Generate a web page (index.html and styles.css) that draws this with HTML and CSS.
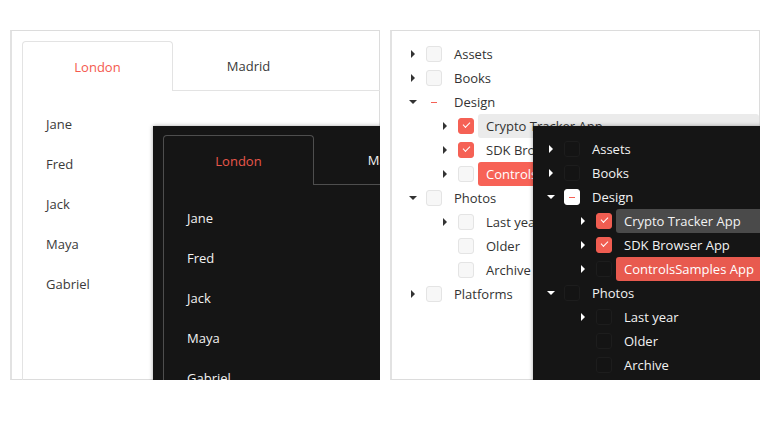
FILE: index.html
```html
<!DOCTYPE html>
<html lang="en">
<head>
    <meta charset="UTF-8">
    <title>Tabs and tree themes</title>
    <link rel="stylesheet" href="styles.css">
</head>
<body>

<div class="stage">
    <!-- tab view, light and dark -->
    <div class="card">
        <div class="demo light">
            <div class="tabs">
                <div class="tab active">London</div>
                <div class="tab">Madrid</div>
                <div class="tab-fill"></div>
            </div>
            <ul class="people">
                <li>Jane</li>
                <li>Fred</li>
                <li>Jack</li>
                <li>Maya</li>
                <li>Gabriel</li>
            </ul>
        </div>
        <div class="demo dark overlay">
            <div class="tabs">
                <div class="tab active">London</div>
                <div class="tab">Madrid</div>
                <div class="tab-fill"></div>
            </div>
            <ul class="people">
                <li>Jane</li>
                <li>Fred</li>
                <li>Jack</li>
                <li>Maya</li>
                <li>Gabriel</li>
            </ul>
        </div>
    </div>

    <!-- tree view, light and dark -->
    <div class="card">
        <div class="demo light tree">
            <div class="node lvl1"><span class="exp right"></span><span class="chk"></span><span class="label">Assets</span></div>
            <div class="node lvl1"><span class="exp right"></span><span class="chk"></span><span class="label">Books</span></div>
            <div class="node lvl1"><span class="exp down"></span><span class="chk part"></span><span class="label">Design</span></div>
            <div class="node lvl2"><span class="exp right"></span><span class="chk on"></span><span class="label hover">Crypto Tracker App</span></div>
            <div class="node lvl2"><span class="exp right"></span><span class="chk on"></span><span class="label">SDK Browser App</span></div>
            <div class="node lvl2"><span class="exp right"></span><span class="chk"></span><span class="label selected">ControlsSamples App</span></div>
            <div class="node lvl1"><span class="exp down"></span><span class="chk"></span><span class="label">Photos</span></div>
            <div class="node lvl2"><span class="exp right"></span><span class="chk"></span><span class="label">Last year</span></div>
            <div class="node lvl2"><span class="exp"></span><span class="chk"></span><span class="label">Older</span></div>
            <div class="node lvl2"><span class="exp"></span><span class="chk"></span><span class="label">Archive</span></div>
            <div class="node lvl1"><span class="exp right"></span><span class="chk"></span><span class="label">Platforms</span></div>
        </div>
        <div class="demo dark tree overlay">
            <div class="node lvl1"><span class="exp right"></span><span class="chk"></span><span class="label">Assets</span></div>
            <div class="node lvl1"><span class="exp right"></span><span class="chk"></span><span class="label">Books</span></div>
            <div class="node lvl1"><span class="exp down"></span><span class="chk part"></span><span class="label">Design</span></div>
            <div class="node lvl2"><span class="exp right"></span><span class="chk on"></span><span class="label hover">Crypto Tracker App</span></div>
            <div class="node lvl2"><span class="exp right"></span><span class="chk on"></span><span class="label">SDK Browser App</span></div>
            <div class="node lvl2"><span class="exp right"></span><span class="chk"></span><span class="label selected">ControlsSamples App</span></div>
            <div class="node lvl1"><span class="exp down"></span><span class="chk"></span><span class="label">Photos</span></div>
            <div class="node lvl2"><span class="exp right"></span><span class="chk"></span><span class="label">Last year</span></div>
            <div class="node lvl2"><span class="exp"></span><span class="chk"></span><span class="label">Older</span></div>
            <div class="node lvl2"><span class="exp"></span><span class="chk"></span><span class="label">Archive</span></div>
            <div class="node lvl1"><span class="exp right"></span><span class="chk"></span><span class="label">Platforms</span></div>
        </div>
    </div>
</div>

</body>
</html>
```

FILE: styles.css
```css
body {
    margin: 0;
    background-color: #fff;
    font-family: "Open Sans", "Noto Sans", sans-serif;
    font-size: 13px;
}
.stage {
    display: flex;
    gap: 10px;
    padding: 30px 0 0 10px;
}
.card {
    position: relative;
    width: 370px;
    height: 350px;
    overflow: hidden;
}
.demo {
    box-sizing: border-box;
}
.demo.light {
    height: 100%;
    border: 1px solid #dcdcdc;
    border-left: 2px solid #e2e2e2;
    background-color: #fff;
    color: #3a3a3a;
    padding: 10px 0 0 10px;
}
.demo.dark {
    background-color: #151515;
    color: #f2f2f2;
    padding: 9px 0 0 10px;
}
/* the dark copy sits over the light one */
.overlay {
    position: absolute;
    left: 143px;
    top: 96px;
    width: 320px;
    height: 320px;
    box-shadow: 0 0 4px rgba(0, 0, 0, 0.35);
}

/* tabs */
.tabs {
    display: flex;
    width: 520px;
}
.tab {
    width: 151px;
    height: 50px;
    box-sizing: border-box;
    display: flex;
    align-items: center;
    justify-content: center;
    border-bottom: 1px solid #e3e3e3;
}
.tab.active {
    color: #f45a4e;
    border: 1px solid #e3e3e3;
    border-bottom: none;
    border-radius: 4px 4px 0 0;
}
.tab-fill {
    flex: 1;
    border-bottom: 1px solid #e3e3e3;
}
.people {
    list-style: none;
    margin: 0;
    padding: 13px 0 0 23px;
    border-left: 1px solid #e3e3e3;
    height: 400px;
}
.people li {
    height: 40px;
    line-height: 40px;
}
.dark .tab,
.dark .tab.active,
.dark .tab-fill,
.dark .people {
    border-color: #4e4e4e;
}
.dark .tab.active {
    color: #e9574b;
}

/* tree */
.demo.light.tree {
    padding: 11px 0 0 13px;
    color: #333;
}
.demo.dark.tree {
    padding: 11px 0 0 10px;
}
.node {
    display: flex;
    align-items: center;
    height: 24px;
}
.lvl2 {
    padding-left: 32px;
}
.exp {
    width: 16px;
    height: 24px;
    margin-right: 5px;
    display: flex;
    align-items: center;
    justify-content: center;
    flex-shrink: 0;
}
.exp.right::before {
    content: "";
    border-left: 4px solid #333;
    border-top: 4px solid transparent;
    border-bottom: 4px solid transparent;
}
.exp.down::before {
    content: "";
    border-top: 4px solid #333;
    border-left: 4px solid transparent;
    border-right: 4px solid transparent;
}
.dark .exp.right::before {
    border-left-color: #fff;
}
.dark .exp.down::before {
    border-top-color: #fff;
}
.chk {
    position: relative;
    width: 16px;
    height: 16px;
    box-sizing: border-box;
    border: 1px solid #e4e4e4;
    border-radius: 3px;
    background-color: #f7f7f7;
    flex-shrink: 0;
}
.chk.on {
    background-color: #f56155;
    border-color: #f56155;
}
.chk.on::after {
    content: "";
    position: absolute;
    left: 4px;
    top: 3px;
    width: 6px;
    height: 3px;
    border-left: 1px solid #fff;
    border-bottom: 1px solid #fff;
    transform: rotate(-45deg);
}
.chk.part {
    background-color: transparent;
    border-color: transparent;
}
.chk.part::after {
    content: "";
    position: absolute;
    left: 4px;
    top: 7px;
    width: 6px;
    height: 1px;
    background-color: #f56155;
}
.dark .chk {
    background-color: #141414;
    border-color: #1d1d1d;
}
.dark .chk.on {
    background-color: #f05d51;
    border-color: #f05d51;
}
.dark .chk.part {
    background-color: #fff;
    border-color: #fff;
}
.label {
    flex: 1;
    margin-left: 4px;
    padding: 0 8px;
    height: 24px;
    line-height: 24px;
    border-radius: 3px;
    white-space: nowrap;
}
.label.hover {
    background-color: #ebebeb;
}
.label.selected {
    background-color: #f76256;
    color: #fff;
}
.dark .label.hover {
    background-color: #4a4a4a;
}
.dark .label.selected {
    background-color: #e85a4f;
}
```
